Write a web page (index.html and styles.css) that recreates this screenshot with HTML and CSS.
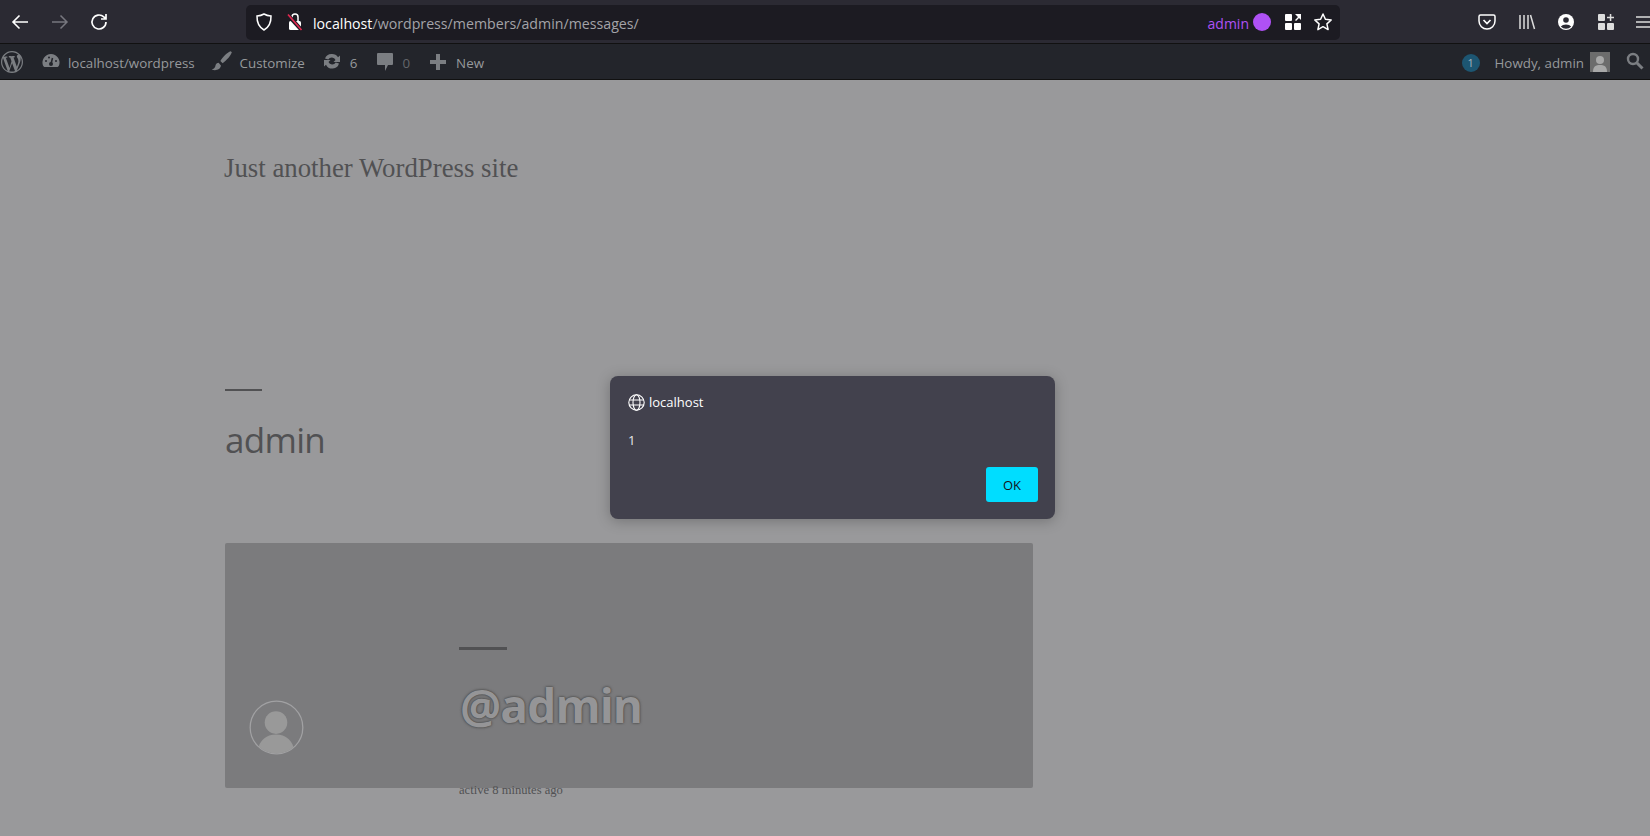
FILE: index.html
```html
<!DOCTYPE html>
<html lang="en">
<head>
<meta charset="utf-8">
<title>admin messages</title>
<link rel="stylesheet" href="styles.css">
</head>
<body>
<header class="toolbar">
  <div class="nav">
    <svg class="ic" width="20" height="20" viewBox="0 0 20 20"><path d="M18 10H3M9.500 3.500 3 10l6.500 6.500" fill="none" stroke="#fff" stroke-width="1.600"/></svg>
    <svg class="ic" width="20" height="20" viewBox="0 0 20 20"><path d="M2 10h15M10.500 3.500 17 10l-6.500 6.500" fill="none" stroke="#77777f" stroke-width="1.500"/></svg>
    <svg class="ic" width="20" height="20" viewBox="0 0 20 20"><path d="M17 10a7 7 0 1 1-2.200-5.100L17 7M17 2v5h-5" fill="none" stroke="#fff" stroke-width="1.700"/></svg>
  </div>
  <div class="urlbar">
    <svg width="18" height="20" viewBox="0 0 18 20"><path d="M9 2c2 1.200 4 1.800 7 2 .2 6.500-1.800 11-7 14C3.800 15 1.800 10.500 2 4c3-.2 5-.8 7-2z" fill="none" stroke="#fff" stroke-width="1.500"/></svg>
    <svg class="lock" width="16" height="20" viewBox="0 0 16 20"><path d="M5 9V5a3 3 0 0 1 6 0v4" fill="none" stroke="#fff" stroke-width="1.500"/><rect x="2" y="9" width="12" height="9" rx="1.500" fill="#fff"/><path d="m.5 2.500 14 15.500" stroke="#1c1b22" stroke-width="4"/><path d="m1 2.500 13.500 15.500" stroke="#e22850" stroke-width="1.700"/></svg>
    <div class="url"><span class="host">localhost</span>/wordpress/members/admin/messages/</div>
    <span class="ctn">admin</span><span class="dot"></span>
    <svg width="18" height="18" viewBox="0 0 18 18"><g fill="#fff"><rect x="1" y="1" width="7" height="7" rx="1"/><rect x="1" y="10" width="7" height="7" rx="1"/><rect x="10" y="10" width="7" height="7" rx="1"/><path d="M11 1h6v6l-2-2-3 3-1-1 3-3z"/></g></svg>
    <svg width="20" height="20" viewBox="0 0 20 20"><path d="m10 2 2.400 5.300 5.800.7-4.300 3.900 1.200 5.700-5.100-2.900-5.100 2.900 1.200-5.700L1.800 8l5.800-.7z" fill="none" stroke="#fff" stroke-width="1.500" stroke-linejoin="round"/></svg>
  </div>
  <div class="tools">
    <svg width="18" height="18" viewBox="0 0 18 18"><path d="M2.500 2h13A1.500 1.500 0 0 1 17 3.500V8A8 8 0 0 1 1 8V3.500A1.500 1.500 0 0 1 2.500 2z" fill="none" stroke="#fff" stroke-width="1.500"/><path d="m5.500 7 3.500 3.500L12.500 7" fill="none" stroke="#fff" stroke-width="1.700"/></svg>
    <svg width="18" height="18" viewBox="0 0 18 18"><path d="M2 2v14M6 2v14M10 2v14M12.500 2l4 14" fill="none" stroke="#ddd" stroke-width="1.500"/></svg>
    <svg width="18" height="18" viewBox="0 0 18 18"><circle cx="9" cy="9" r="8" fill="#fff"/><circle cx="9" cy="7" r="2.800" fill="#2b2a33"/><path d="M3.800 13.500a6 4 0 0 1 10.400 0 7 7 0 0 1-10.400 0z" fill="#2b2a33"/></svg>
    <svg width="18" height="18" viewBox="0 0 18 18"><g fill="#ddd"><rect x="1" y="1" width="7" height="7" rx="1"/><rect x="1" y="10" width="7" height="7" rx="1"/><rect x="10" y="10" width="7" height="7" rx="1"/><path d="M12.800 1h1.500v2.800H17v1.500h-2.700V8h-1.500V5.300H10V3.800h2.800z"/></g></svg>
    <svg width="16" height="14" viewBox="0 0 16 14"><path d="M0 2h16M0 7h16M0 12h16" stroke="#ddd" stroke-width="1.500"/></svg>
  </div>
</header>

<nav class="adminbar">
  <svg class="wp" width="22" height="22" viewBox="0 0 20 20"><path fill="#7b7e82" d="M20 10c0-5.510-4.490-10-10-10C4.480 0 0 4.490 0 10c0 5.520 4.480 10 10 10 5.510 0 10-4.480 10-10zM7.780 15.370L4.370 6.220c.55-.02 1.170-.08 1.170-.08.5-.06.44-1.130-.06-1.110 0 0-1.450.11-2.370.11-.18 0-.37 0-.58-.01C4.120 2.690 6.930 1.030 10.010 1.030c2.300 0 4.390.87 5.970 2.300-.66-.11-1.600.38-1.600 1.540 0 .72.44 1.330.88 2.050.35.61.55 1.360.55 2.460 0 1.490-1.400 5-1.400 5l-3.030-8.370c.54-.02.82-.17.82-.17.5-.05.44-1.250-.06-1.220 0 0-1.440.12-2.380.12-.87 0-2.330-.12-2.330-.12-.5-.03-.56 1.200-.06 1.220l.92.08 1.260 3.410zM17.410 10c.24-.64.74-1.870.43-4.250.7 1.290 1.050 2.710 1.050 4.250 0 3.290-1.730 6.240-4.480 7.820.99-2.680 1.990-5.240 3-7.820zM6.100 18.090C3.120 16.650 1.110 13.530 1.110 10c0-1.300.23-2.480.72-3.590C3.250 10.300 4.670 14.200 6.100 18.090zm4.030-6.950l2.580 6.980c.02.05.04.10.07.14-.88.31-1.800.48-2.800.48-.84 0-1.660-.12-2.430-.35.86-2.520 1.730-5.040 2.580-7.250z"/></svg>
  <span class="item first"><svg width="20" height="20" viewBox="0 0 20 20"><path d="M10 3a8.500 8.500 0 0 0-8 11.500c.3.800 1 1.500 2 1.500h12c1 0 1.700-.7 2-1.500A8.500 8.500 0 0 0 10 3z" fill="#7b7e82"/><circle cx="10" cy="13" r="2" fill="#23252b"/><path d="m10 13 1.500-6" stroke="#23252b" stroke-width="1.500"/><circle cx="5" cy="10" r="1" fill="#23252b"/><circle cx="8" cy="6.500" r="1" fill="#23252b"/><circle cx="15" cy="10" r="1" fill="#23252b"/></svg>localhost/wordpress</span>
  <span class="item brush"><svg width="23" height="23" viewBox="0 0 20 20"><path d="M18 1c-3 1-7 5-9 8.500l2 2C14.500 9 18 5 19 2zM7.500 11c-2.500.2-2.500 2-3 3.500-.3 1-1.500 2-3 2.500 3 1.200 7.500.5 8-3.500z" fill="#7b7e82"/></svg>Customize</span>
  <span class="item updates"><svg width="20" height="20" viewBox="0 0 20 20"><path d="M10 3a7 7 0 0 1 6 3.300L18 4.500V11h-6.500l2-2A4 4 0 0 0 6.300 8.500L3 7.500A7 7 0 0 1 10 3zM2 9h6.500l-2 2a4 4 0 0 0 7.200.500l3.300 1A7 7 0 0 1 4 13.700L2 15.500z" fill="#7b7e82"/></svg>6</span>
  <span class="item dim"><svg width="20" height="20" viewBox="0 0 20 20"><path d="M3 1h14a1 1 0 0 1 1 1v10a1 1 0 0 1-1 1h-4l-3 6v-6H3a1 1 0 0 1-1-1V2a1 1 0 0 1 1-1z" fill="#7b7e82"/></svg>0</span>
  <span class="item plus"><svg width="20" height="20" viewBox="0 0 20 20"><path d="M8 2h4v6h6v4h-6v6H8v-6H2V8h6z" fill="#7b7e82"/></svg>New</span>
  <span class="spacer"></span>
  <span class="badge">1</span>
  <span class="howdy">Howdy, admin</span>
  <span class="avatar"><svg width="20" height="20" viewBox="0 0 20 20"><rect width="20" height="20" fill="#6c6c6c"/><circle cx="10" cy="8" r="4" fill="#a8a8a8"/><path d="M3 20c0-6 3-7 7-7s7 1 7 7z" fill="#a8a8a8"/></svg></span>
  <svg class="search" width="20" height="20" viewBox="0 0 20 20"><circle cx="8" cy="8" r="5" fill="none" stroke="#7b7e82" stroke-width="2.400"/><path d="m12 12 5.500 5.500" stroke="#7b7e82" stroke-width="3"/></svg>
</nav>

<main class="page">
  <p class="tagline">Just another WordPress site</p>
  <div class="rule"></div>
  <h1 class="title">admin</h1>
  <section class="cover">
    <svg class="cover-avatar" width="55" height="55" viewBox="0 0 56 56"><defs><clipPath id="c"><circle cx="28" cy="28" r="26.500"/></clipPath></defs><circle cx="28" cy="28" r="26.800" fill="none" stroke="#a1a1a3" stroke-width="1.300"/><circle cx="27.500" cy="23" r="11.500" fill="#999"/><ellipse cx="27.500" cy="51" rx="18" ry="16" fill="#999" clip-path="url(#c)"/></svg>
    <div class="cover-body">
      <div class="rule wide"></div>
      <div class="handle">@admin</div>
      <div class="active">active 8 minutes ago</div>
    </div>
  </section>
</main>

<div class="dialog" role="alertdialog">
  <div class="origin">
    <svg width="17" height="17" viewBox="0 0 17 17"><g fill="none" stroke="#fff" stroke-width="1.100"><circle cx="8.500" cy="8.500" r="7.700"/><ellipse cx="8.500" cy="8.500" rx="3.500" ry="7.700"/><path d="M1 6h15M1 11h15"/></g></svg>
    localhost
  </div>
  <div class="message">1</div>
  <div class="actions"><button class="ok">OK</button></div>
</div>
</body>
</html>
```
FILE: styles.css
```css
* { box-sizing: border-box; }
html, body { margin: 0; height: 100%; overflow: hidden; }
body { background: #99999b; font-family: "Open Sans", "Noto Sans", sans-serif; position: relative; }

.toolbar { height: 44px; background: #2b2a33; border-bottom: 1px solid #111; display: flex; align-items: center; padding-left: 10px; }
.nav { display: flex; gap: 19.500px; width: 236px; flex: none; }
.urlbar { width: 1094px; flex: none; height: 35px; margin-top: 1px; background: #1c1b22; border-radius: 5px; display: flex; align-items: center; padding: 0 7px 0 9px; }
.lock { margin-left: 14px; }
.url { flex: 1; margin: 2px 0 0 10px; font-size: 14.200px; color: #a3a3a8; white-space: nowrap; }
.host { color: #fff; }
.ctn { color: #af51f5; font-size: 14px; margin: 2px 4px 0 0; }
.dot { width: 18px; height: 18px; border-radius: 50%; background: #af51f5; margin-right: 13px; }
.urlbar svg:last-child { margin-left: 11px; }
.tools { display: flex; flex: none; align-items: center; gap: 21.500px; margin-left: 138px; }

.adminbar { height: 36px; padding-top: 2px; background: #23252b; border-bottom: 1px solid #111; display: flex; align-items: center; color: #97999c; font-size: 13.350px; }
.adminbar svg { flex: none; }
.wp { margin: -2px 0 0 1px; }
.item { display: flex; align-items: center; gap: 7px; margin-left: 17px; white-space: nowrap; }
.item svg { margin-top: -3px; }
.item.first { margin-left: 18px; }
.item.brush { margin-left: 15px; gap: 7px; }
.item.updates { gap: 8px; }
.item.dim { color: #63656a; margin-left: 18px; }
.item.dim svg { margin-top: -2px; }
.item.plus { margin-left: 18px; gap: 8px; }
.item.plus svg { margin-top: -1px; }
.spacer { flex: 1; }
.badge { width: 18px; height: 18px; border-radius: 50%; background: #1d5672; color: #a6b6c0; font-size: 11px; text-align: center; line-height: 18px; margin-top: 1px; }
.howdy { margin-left: 15px; }
.avatar { margin: -2px 0 0 6px; height: 20px; display: block; }
.search { margin: -4px 5px 0 15px; }

.page { padding-left: 225px; }
.tagline { margin: 0 0 0 -1px; padding-top: 70px; height: 174px; font: 26.800px/36px "Liberation Serif", serif; color: #515153; }
.rule { width: 37px; height: 2px; background: #515153; margin-top: 134.500px; }
.title { margin: 24px 0 0; font: 400 35px/50px "Open Sans", sans-serif; letter-spacing: -0.700px; color: #515153; }
.cover { width: 808px; height: 245px; margin-top: 78.500px; background: #7b7b7d; border-radius: 2px; display: flex; position: relative; }
.cover-avatar { margin: 157px 0 0 24px; flex: none; }
.cover-body { margin-left: 155px; width: 400px; }
.rule.wide { width: 48px; height: 3px; margin-top: 104px; }
.handle { margin: 25px 0 0 1px; font: 700 46px/60px "Open Sans", sans-serif; color: #959597; text-shadow: 0 0 2px #444, 0 0 3px #555; letter-spacing: -0.900px; }
.active { margin-top: 46px; font: 12.600px/18px "Liberation Serif", serif; color: #515153; white-space: nowrap; }

.dialog { position: absolute; left: 610px; top: 376px; width: 445px; height: 143px; background: #42414d; border-radius: 8px; box-shadow: 0 2px 14px rgba(0,0,0,.25); padding: 18px 17px 17px 18px; color: #fff; display: flex; flex-direction: column; }
.origin { display: flex; align-items: center; gap: 4px; font-size: 13px; line-height: 17px; }
.message { margin-top: 21px; font-size: 13px; line-height: 17px; color: #e6e6ea; }
.actions { display: flex; justify-content: flex-end; margin-top: auto; }
.ok { width: 52px; height: 35px; border: 0; border-radius: 3px; background: #00ddff; color: #15141a; font: 13px "Open Sans", sans-serif; }
```
